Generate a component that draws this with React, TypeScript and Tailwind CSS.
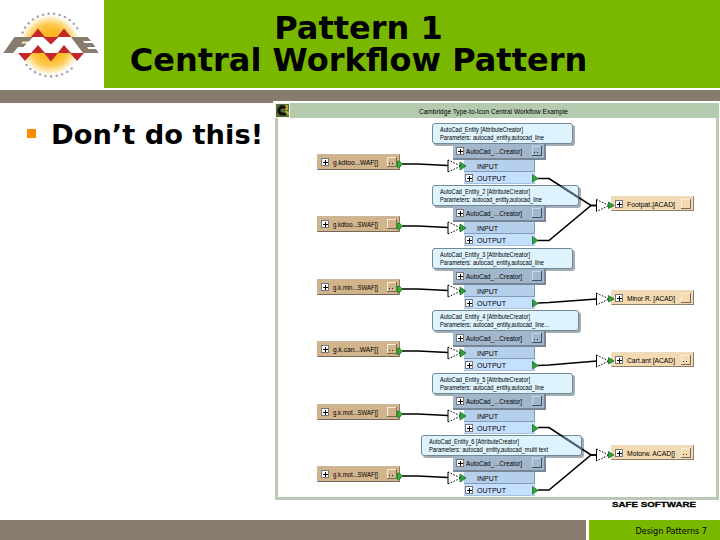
import React from "react";

type Note = { x: number; w: number; title: string; titleWidth: number; params: string; paramsWidth: number };

const sources = [
  { name: "g.kdtoo...WAF[]", dots: true },
  { name: "g.kdtoo...SWAF[]", dots: false },
  { name: "g.k.min...SWAF[]", dots: true },
  { name: "g.k.can...WAF[]", dots: true },
  { name: "g.k.mot...SWAF[]", dots: false },
  { name: "g.k.mot...SWAF[]", dots: true },
];

const notes: Note[] = [
  { x: 432, w: 141, title: "AutoCad_Entity [AttributeCreator]", titleWidth: 83, params: "Parameters: autocad_entity,autocad_line", paramsWidth: 104 },
  { x: 432, w: 147, title: "AutoCad_Entity_2 [AttributeCreator]", titleWidth: 90, params: "Parameters: autocad_entity,autocad_line", paramsWidth: 102 },
  { x: 432, w: 141, title: "AutoCad_Entity_3 [AttributeCreator]", titleWidth: 90, params: "Parameters: autocad_entity,autocad_line", paramsWidth: 104 },
  { x: 432, w: 147, title: "AutoCad_Entity_4 [AttributeCreator]", titleWidth: 90, params: "Parameters: autocad_entity,autocad_line...", paramsWidth: 109 },
  { x: 432, w: 141, title: "AutoCad_Entity_5 [AttributeCreator]", titleWidth: 90, params: "Parameters: autocad_entity,autocad_line", paramsWidth: 104 },
  { x: 421, w: 161, title: "AutoCad_Entity_6 [AttributeCreator]", titleWidth: 90, params: "Parameters: autocad_entity,autocad_multi text", paramsWidth: 119 },
];

const targets = [
  { y: 196, name: "Footpat.[ACAD]", dots: false },
  { y: 290, name: "Minor R. [ACAD]", dots: false },
  { y: 352, name: "Cart.ant [ACAD]", dots: true },
  { y: 445, name: "Motorw. ACAD[]", dots: true },
];

const wires = [
  "M538 178.5H549L591 205.5H597",
  "M538 240.5H549L591 205.5H597",
  "M538 303L549 302.5L597 299",
  "M538 365.5L549 365L597 361",
  "M538 427.5H549L591 455H597",
  "M538 490H549L591 455H597",
];

const PITCH = 62.4;

const Label: React.FC<{ text: string; width: number; size?: number }> = ({ text, width, size = 8 }) => (
  <svg width={width} height="10" className="block shrink-0 overflow-visible">
    <text x="0" y="8" fontSize={size} textLength={width} lengthAdjust="spacingAndGlyphs" fontFamily="Liberation Sans, sans-serif">
      {text}
    </text>
  </svg>
);

const Plus: React.FC = () => (
  <svg width="8" height="8" className="block shrink-0" shapeRendering="crispEdges">
    <rect x="0.5" y="0.5" width="7" height="7" fill="#fff" stroke="#77777a" />
    <path d="M2 4.5H7M4.5 2V7" stroke="#000" />
  </svg>
);

const MoreButton: React.FC<{ light: string; dark: string; dots: boolean }> = ({ light, dark, dots }) => (
  <svg width="10" height="10" className="block shrink-0" shapeRendering="crispEdges">
    <path d="M0.5 9V0.5H9" fill="none" stroke={light} />
    <path d="M0 9.5H9.5V0" fill="none" stroke={dark} />
    {dots && <path d="M2 6.5H3M5 6.5H6" stroke="#222" />}
  </svg>
);

const Logo: React.FC = () => (
  <svg width="104" height="88" className="block shrink-0">
    <defs>
      <radialGradient id="sun" cx="50" cy="45" r="30" gradientUnits="userSpaceOnUse">
        <stop offset="0.45" stopColor="#fdb924" />
        <stop offset="0.7" stopColor="#fdcb50" />
        <stop offset="1" stopColor="#fff" />
      </radialGradient>
    </defs>
    <circle cx="50" cy="45" r="30" fill="url(#sun)" />
    <path d="M22.5 32.500A31 31 0 0 1 79.500 32.500M26.5 65A31.5 31.5 0 0 0 75 65" fill="none" stroke="#a7a6aa" strokeWidth="2.6" strokeLinecap="round" strokeDasharray="0 5.6" />
    <path d="M31 37H71L84 53H18Z" fill="#fff" />
    <path d="M31 37L38 28.500L45 37ZM43 37H58.500L51 44.500ZM57 37L64 28.500L71 37Z" fill="#c4262e" />
    <path d="M18 53H32L25 61ZM31 53L38 45L45 53ZM44 53H58L51 61.500ZM57.500 53L64 45L71 53ZM70 53H84L77 61Z" fill="#c4262e" />
    <path d="M14.5 37H33L29 41.500H22.500L21.500 43.500H26.500L23.500 47H18L13 53H3.300Z" fill="#877c6e" />
    <path d="M71 37H87.500L91 41H83L84.500 43H92.500L95.500 47H87L88.500 49H96L98.700 53H83Z" fill="#877c6e" />
  </svg>
);

const FileNode: React.FC<{ name: string; width: number; tone: string; dots: boolean }> = ({ name, width, tone, dots }) => (
  <div className={tone}>
    <Plus />
    <div className="ml-[4px] grow">
      <Label text={name} width={width} />
    </div>
    <MoreButton light="#faeed6" dark="#786c58" dots={dots} />
  </div>
);

const Transformer: React.FC<{ index: number; note: Note }> = ({ index, note }) => (
  <>
    <div
      className="absolute h-[21px] rounded-[3px] border border-[#72899a] bg-[#def3fd] pl-[7px] shadow-[2px_2px_0_#a4adb3]"
      style={{ left: note.x, top: 123 + Math.round(index * PITCH), width: note.w }}
    >
      <div className="h-[8px]">
        <Label text={note.title} width={note.titleWidth} size={7.5} />
      </div>
      <Label text={note.params} width={note.paramsWidth} size={7.5} />
    </div>
    <div className="absolute left-[453px] w-[93px]" style={{ top: 144 + Math.round(index * PITCH) }}>
      <div className="flex h-[16px] items-center border-r-2 border-b-2 border-[#778798] bg-[#a3b7cc] pr-[2px] pl-[3px]">
        <Plus />
        <div className="ml-[2px] grow">
          <Label text="AutoCad_...Creator]" width={56} />
        </div>
        <MoreButton light="#c6d9e9" dark="#435364" dots={index % 3 === 0} />
      </div>
      <div className="ml-[11px] flex h-[12px] w-[71px] items-center border-r border-b border-[#849bb3] bg-[#b6d0ec] pl-[13px]">
        <Label text="INPUT" width={21} />
      </div>
      <div className="ml-[11px] flex h-[12px] w-[71px] items-center border-b border-[#a8c1da] bg-[#c5dfff] pl-[1px]">
        <Plus />
        <div className="ml-[4px]">
          <Label text="OUTPUT" width={29} />
        </div>
      </div>
    </div>
  </>
);

const Diagram: React.FC = () => (
  <div className="absolute top-[101px] left-[273px] h-[399px] w-[447px] bg-white pt-[2px] pl-[2px]">
    <div className="h-[397px] w-[444px] border-3 border-t-0 border-[#bbc8b5]">
      <div className="-ml-[3px] flex h-[15px] w-[444px] items-center justify-center bg-[#b4cbae] pr-[7px]">
        <Label text="Cambridge Type-to-Icon Central Workflow Example" width={149} />
      </div>
    </div>
    <svg width="15" height="15" className="absolute top-[2px] left-[2px]">
      <rect x="0.5" y="0.5" width="14" height="14" fill="#576b3c" stroke="#eef2e9" />
      <path d="M11 4H6L4 6V9L6 11H11" fill="none" stroke="#111" strokeWidth="3" />
      <path d="M10 3H12V6H10M10 9H13V12" fill="none" stroke="#e0b52f" strokeWidth="1.500" />
    </svg>
    {/* node coordinates are slide coordinates */}
    <div className="absolute -top-[101px] -left-[273px] h-[540px] w-[720px]">
      {sources.map((s, i) => (
        <div key={i} className="absolute left-[317px]" style={{ top: 154 + Math.round(i * PITCH) }}>
          <FileNode name={s.name} dots={s.dots} width={45} tone="flex h-[16px] w-[83px] items-center border border-t-[#c9b79e] border-l-[#c9b79e] border-r-[#8c7a62] border-b-[#75695a] bg-[#d2b48c] pr-[2px] pl-[3px]" />
        </div>
      ))}
      {targets.map((t) => (
        <div key={t.y} className="absolute left-[611px]" style={{ top: t.y }}>
          <FileNode name={t.name} dots={t.dots} width={48} tone="flex h-[15px] w-[83px] items-center border border-t-[#eadcc4] border-l-[#eadcc4] border-r-[#8e8068] border-b-[#8e8068] bg-[#f3dab3] pr-[2px] pl-[3px]" />
        </div>
      ))}
      {notes.map((note, i) => (
        <Transformer key={i} index={i} note={note} />
      ))}
      <svg width="720" height="540" className="absolute top-0 left-0">
        {wires.map((d) => (
          <path key={d} d={d} fill="none" stroke="#000" strokeWidth="1.600" />
        ))}
        {/* wires fade where they run behind a note */}
        <path d="M561 186.200L579 197.800M562.500 436.300L582 449.100" stroke="#52697a" strokeWidth="2" />
        {notes.map((_, i) => (
          <g key={i} transform={`translate(0 ${Math.round(i * PITCH)})`}>
            <path d="M402 164H418L448 165.500" fill="none" stroke="#000" strokeWidth="1.600" />
            <path d="M448 160L461 166L448 172" fill="#fff" stroke="#000" strokeDasharray="1.500 1.500" />
            <path d="M448 160V172" stroke="#000" />
            <path d="M460 162L466 166L460 170Z" fill="#2da53a" stroke="#176b24" strokeWidth="0.800" />
            <path d="M532.500 174.500L538 178.500L532.500 182Z" fill="#2da53a" stroke="#176b24" strokeWidth="0.800" />
            <path d="M397.500 161L400 161.500L402 164.500L400 167L397.500 167.500Z" fill="#2cb52c" stroke="#187a20" strokeWidth="0.800" />
          </g>
        ))}
        {[205.5, 299, 361, 455].map((y) => (
          <g key={y} transform={`translate(0 ${y})`}>
            <path d="M596.500 -6L609 0L596.500 6" fill="#fff" stroke="#000" strokeDasharray="1.500 1.500" />
            <path d="M596.500 -6V6" stroke="#000" />
            <path d="M608.500 -3.500L614 0L608.500 3Z" fill="#2da53a" stroke="#176b24" strokeWidth="0.800" />
          </g>
        ))}
      </svg>
    </div>
  </div>
);

const App: React.FC = () => {
  return (
    <div className="relative flex h-[540px] w-[720px] flex-col overflow-hidden bg-white font-['DejaVu_Sans',sans-serif] text-black">
      {/* Title bar */}
      <header className="flex h-[88px] shrink-0">
        <Logo />
        <h1 className="h-[88px] w-[616px] bg-[#7ab800] pt-[12px] pr-[107px] text-center text-[32px] leading-[32px] font-bold whitespace-nowrap">
          Pattern 1<br />
          Central Workflow Pattern
        </h1>
      </header>
      <div className="mt-[2px] h-[13px] shrink-0 bg-[#877c6e]" />

      {/* Slide content */}
      <main className="flex grow pt-[16px] pl-[27px]">
        <span className="mt-[10px] h-[9px] w-[9px] bg-[#ff8a00]" />
        <p className="ml-[15px] text-[27.300px] leading-[32px] font-bold whitespace-nowrap">Don’t do this!</p>
      </main>
      <Diagram />

      <div className="flex h-[20px] items-start justify-end pr-[24px]">
        <svg width="84" height="10" className="overflow-visible">
          <text x="0" y="7" fontSize="8" fontWeight="bold" stroke="#000" strokeWidth="0.300" textLength="84" lengthAdjust="spacingAndGlyphs" fontFamily="Liberation Sans, sans-serif">
            SAFE SOFTWARE
          </text>
        </svg>
      </div>

      <footer className="flex h-[20px] shrink-0 gap-[3px]">
        <div className="w-[586px] bg-[#877c6e]" />
        <div className="grow bg-[#7ab800] pr-[13px] text-right text-[8.100px] leading-[22px]">Design Patterns 7</div>
      </footer>
    </div>
  );
};

export default App;
